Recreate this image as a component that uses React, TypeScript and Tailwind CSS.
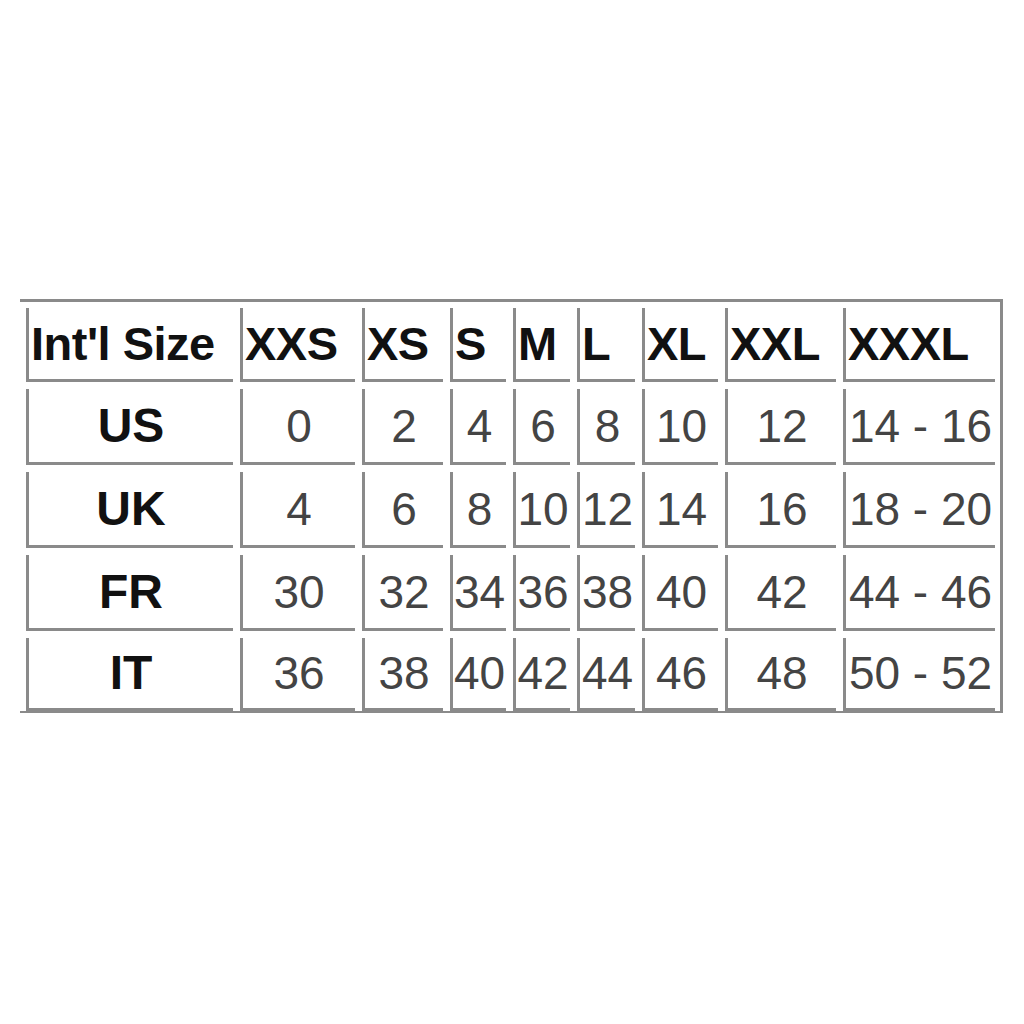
import React from "react";

const cols = ["Int'l Size", "XXS", "XS", "S", "M", "L", "XL", "XXL", "XXXL"];

const rows: { label: string; values: string[] }[] = [
  { label: "US", values: ["0", "2", "4", "6", "8", "10", "12", "14 - 16"] },
  { label: "UK", values: ["4", "6", "8", "10", "12", "14", "16", "18 - 20"] },
  { label: "FR", values: ["30", "32", "34", "36", "38", "40", "42", "44 - 46"] },
  { label: "IT", values: ["36", "38", "40", "42", "44", "46", "48", "50 - 52"] },
];

const cell =
  "border-l-[3px] border-b-[3px] border-[#8a8a8a] bg-white flex items-center overflow-visible whitespace-nowrap leading-none";

export default function App() {
  return (
    <div
      className="min-h-[1024px] w-[1024px] bg-white pt-[299px] pl-[20px]"
      style={{ fontFamily: '"Liberation Sans", Arial, sans-serif' }}
    >
      <div className="inline-block border-t-[3px] border-r-[3px] border-b-[2px] border-[#8a8a8a] pt-[6px] pl-[6px] pr-[5px]">
        <div className="grid grid-cols-[207px_115px_81px_56px_57px_58px_76px_111px_152px] grid-rows-[74px_76px_76px_76px_73px] gap-x-[7px] gap-y-[7px]">
          {cols.map((c) => (
            <div key={c} className={`${cell} pl-[2px] text-[47px] font-bold text-[#111] tracking-[-0.5px]`}>
              {c}
            </div>
          ))}
          {rows.map((r) => (
            <React.Fragment key={r.label}>
              <div className={`${cell} justify-center text-[48px] font-bold text-[#111]`}>{r.label}</div>
              {r.values.map((v, i) => (
                <div key={i} className={`${cell} justify-center text-[46px] text-[#444]`}>
                  {v}
                </div>
              ))}
            </React.Fragment>
          ))}
        </div>
      </div>
    </div>
  );
}
